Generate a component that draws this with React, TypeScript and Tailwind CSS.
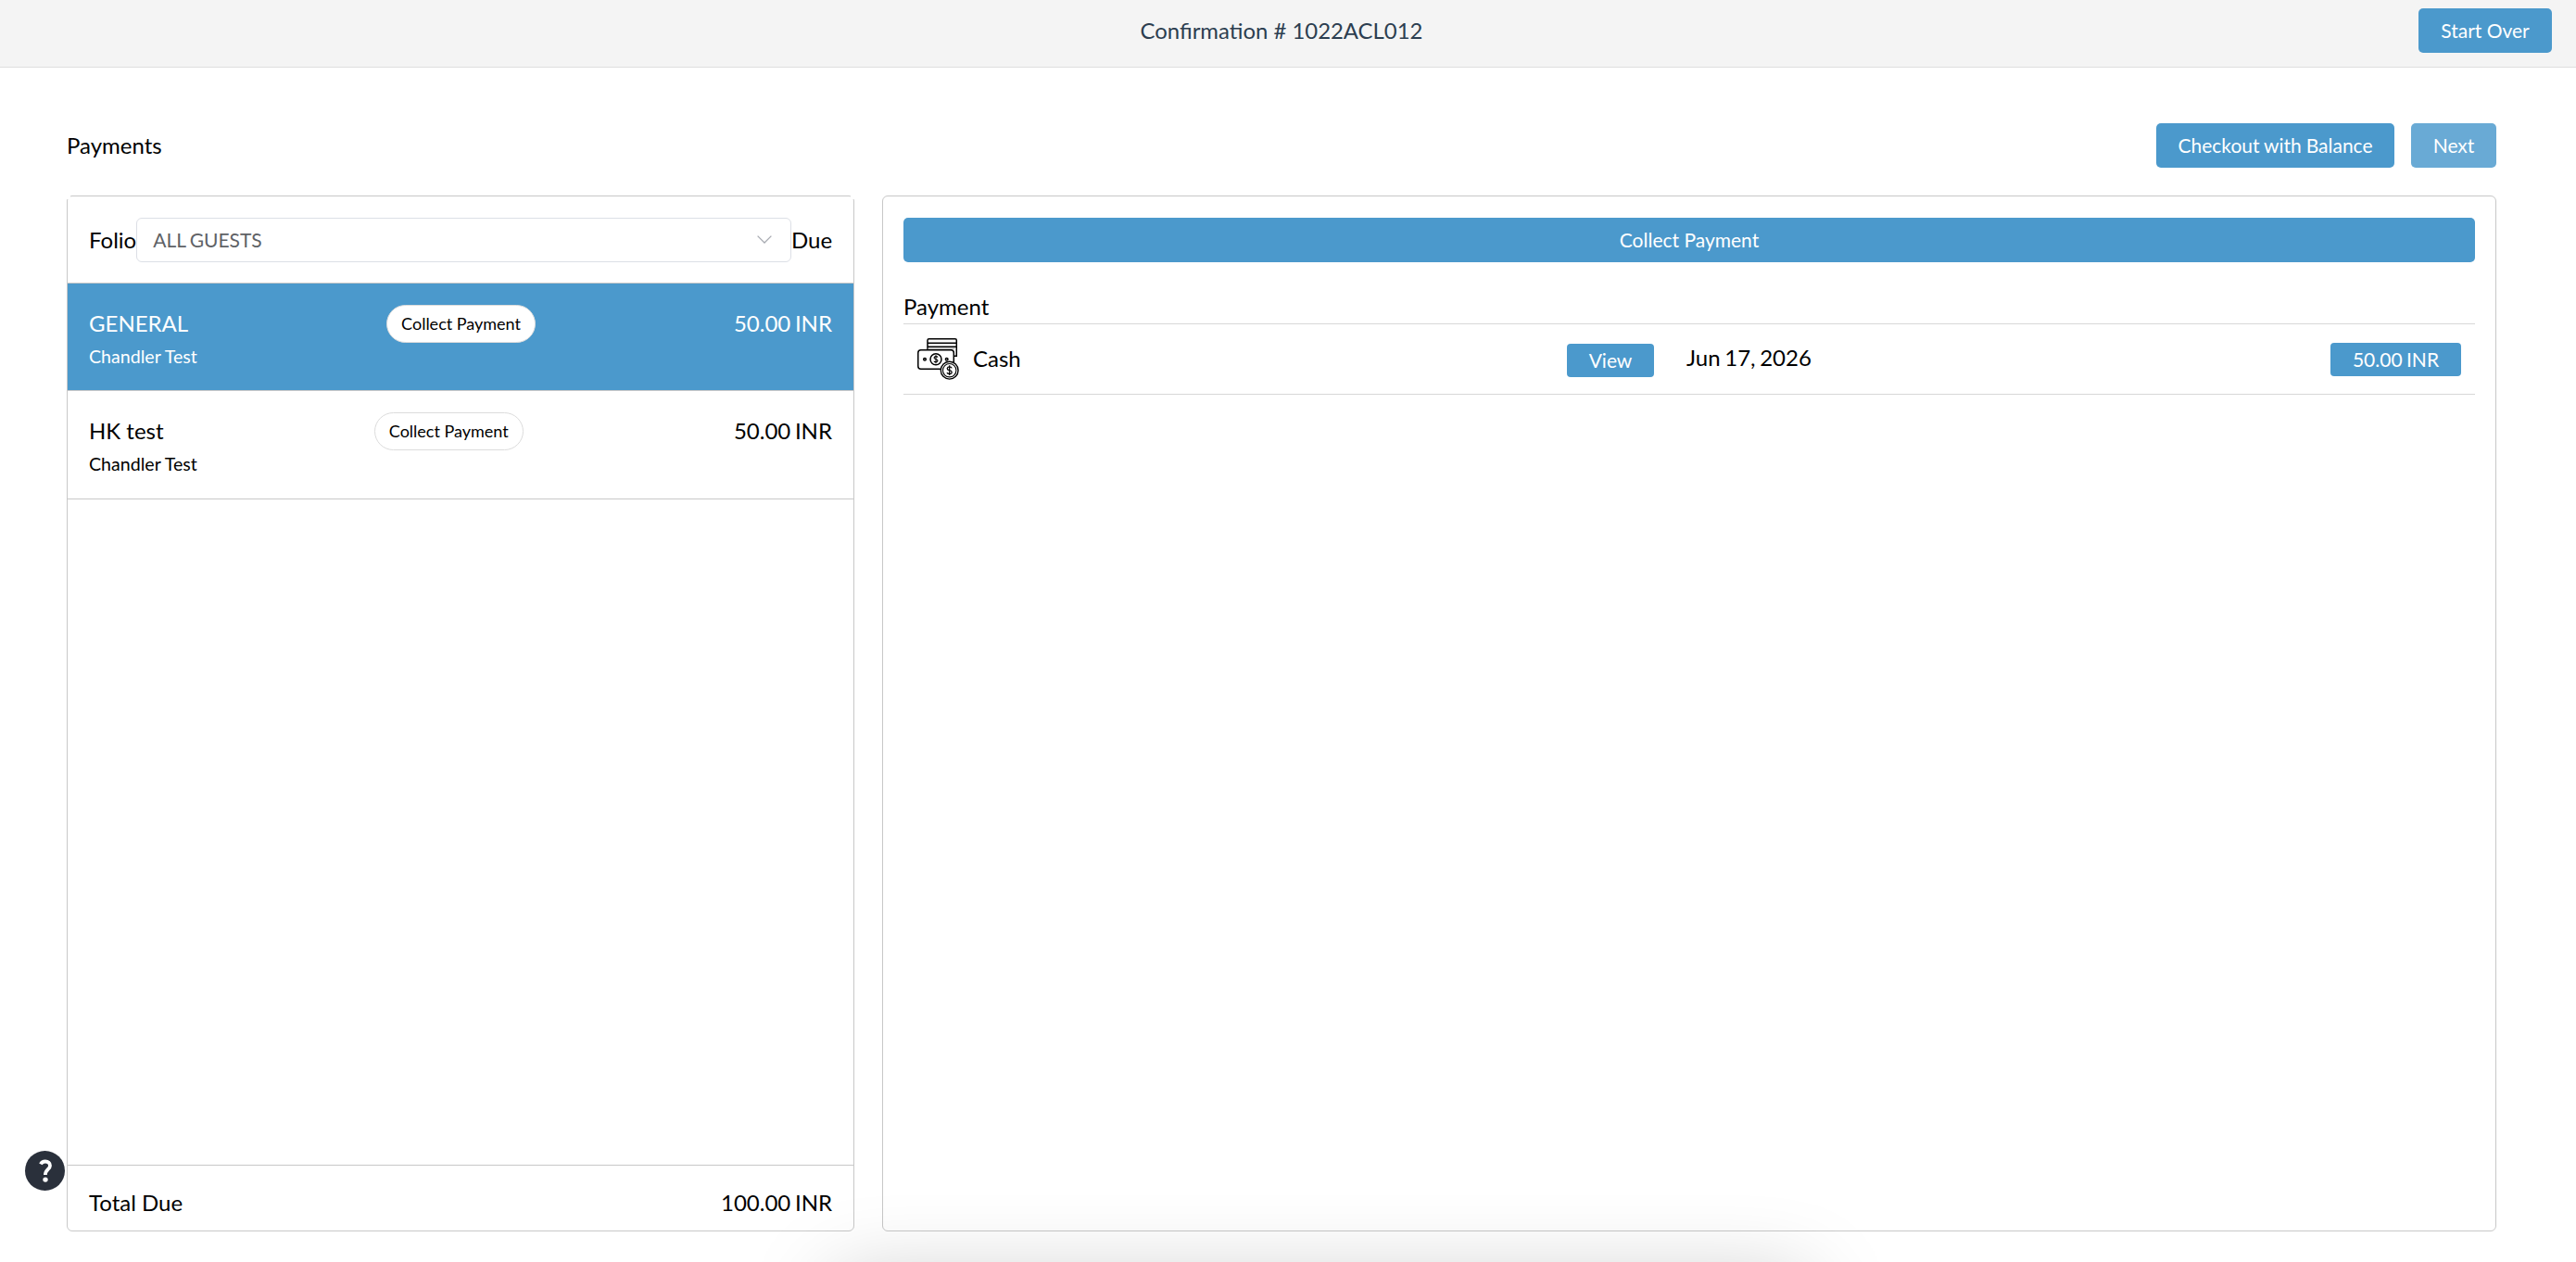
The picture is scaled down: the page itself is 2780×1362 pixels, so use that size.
import type { ReactNode } from "react";

type Folio = { name: string; guest: string; due: string; active: boolean };

const folios: Folio[] = [
  { name: "GENERAL", guest: "Chandler Test", due: "50.00 INR", active: true },
  { name: "HK test", guest: "Chandler Test", due: "50.00 INR", active: false },
];

function Button({ children, className = "" }: { children: ReactNode; className?: string }) {
  return (
    <button
      className={`flex items-center justify-center whitespace-nowrap text-[21px] leading-[25px] text-white ${className}`}
    >
      {children}
    </button>
  );
}

function CashIcon() {
  return (
    <svg width="46" height="46" viewBox="0 0 46 46" fill="none" stroke="#000" strokeWidth="1.5">
      <path d="M11 12V2.2Q11 .8 12.5 .8H40.8Q42.3 .8 42.3 2.2V19.3H39.8" />
      <path d="M11 5.3H42.3M11 9.3H42.3" />
      <path d="M11.5 11.2H40.5" stroke="#999" strokeWidth="1" />
      <rect x=".8" y="12.7" width="38.5" height="20.6" rx="3" fill="#fff" />
      <circle cx="20" cy="22.7" r="6" />
      <circle cx="8" cy="22.7" r="1.3" />
      <circle cx="31.7" cy="22.7" r="1.3" />
      <path
        d="M22 20.6Q21.6 19.6 20 19.6T18 21.1Q18 22.3 20 22.7T22 24.3Q22 25.8 20 25.8T18 24.8M20 18.2V27.2"
        strokeWidth="1.1"
      />
      <circle cx="34.7" cy="34.7" r="9.4" fill="#fff" strokeWidth="1.4" />
      <circle cx="34.7" cy="34.7" r="7.2" strokeWidth="1.1" />
      <path
        d="M37.2 32.3Q36.8 30.9 34.7 30.9T32.2 32.7Q32.2 34.2 34.7 34.7T37.2 36.7Q37.2 38.5 34.7 38.5T32.2 37.1M34.7 29.3V40.1"
        strokeWidth="1.2"
      />
    </svg>
  );
}

function HelpButton() {
  return (
    <button className="absolute left-[27px] top-[1242px] size-[43px] rounded-full bg-[#2a303b]" aria-label="Help">
      <svg width="43" height="43" viewBox="0 0 43 43" fill="none">
        <path
          d="M16.9 14.4C17.8 12.5 19.6 11.5 21.9 11.5C25 11.5 27 13.3 27 15.9C27 20 21.9 19.9 21.9 26"
          stroke="#fff"
          strokeWidth="3.8"
        />
        <circle cx="22" cy="31.1" r="2.7" fill="#fff" />
      </svg>
    </button>
  );
}

function FolioRow({ name, guest, due, active }: Folio) {
  return (
    <div
      className={`border-b border-[#c8c8c8] px-[23px] pt-[23px] ${
        active ? "h-[116px] bg-[#4b99cc] text-white" : "h-[117px] text-black"
      }`}
    >
      <div className="flex h-[41px] items-center justify-between">
        <span className="relative -top-px">{name}</span>
        <button className="h-[41px] w-[161px] rounded-full border border-[#dcdcdc] bg-white pb-[2px] text-[18px] leading-[22px] text-black">
          Collect Payment
        </button>
        <span className="relative -top-px [word-spacing:-1.5px]">{due}</span>
      </div>
      <div className="mt-[3px] text-[19.6px] leading-6">{guest}</div>
    </div>
  );
}

export default function App() {
  return (
    <div className="relative flex h-[1362px] w-[2780px] flex-col overflow-hidden bg-white font-['Lato',sans-serif] text-[24px] leading-[29px] text-black">
      <header className="grid h-[73px] shrink-0 grid-cols-[1fr_auto_1fr] border-b border-[#dedede] bg-[#f4f4f4] px-[26px] pt-[9px]">
        <span />
        <span className="relative -left-[7px] flex h-12 items-center pb-[2px] text-[23.9px] text-[#2c3e50]">
          Confirmation # 1022ACL012
        </span>
        <Button className="h-12 w-[144px] justify-self-end rounded-[5px] bg-[#4b99cc] pb-px">Start Over</Button>
      </header>

      <main className="flex flex-col px-[72px] pr-[86px] pt-[60px]">
        <div className="flex h-12 items-center">
          <h1 className="pb-[2px]">Payments</h1>
          <div className="ml-auto flex gap-[18px]">
            <Button className="h-12 w-[257px] rounded-[5px] bg-[#4b99cc] pb-px [word-spacing:-0.5px]">
              Checkout with Balance
            </Button>
            <Button className="h-12 w-[92px] rounded-[5px] bg-[#69aad5] pb-px">Next</Button>
          </div>
        </div>

        <div className="mt-[30px] flex h-[1118px] gap-[30px]">
          <section className="relative flex w-[850px] flex-col rounded-[6px] border border-[#c8c8c8]">
            <i className="absolute -left-px -top-px size-1 bg-white" />
            <i className="absolute -right-px -top-px size-1 bg-white" />
            <div className="flex h-[94px] items-center border-b border-[#c8c8c8] px-[23px]">
              <span>Folio</span>
              <div className="flex h-12 flex-1 items-center rounded-[6px] border-[1.5px] border-[#dcdfe6] pl-[17px] pr-5 text-[21px] text-[#606266]">
                <span className="[word-spacing:-1px]">ALL GUESTS</span>
                <svg className="ml-auto" width="16" height="9" viewBox="0 0 16 9" fill="none">
                  <path d="M.6 .6L8 8L15.4 .6" stroke="#a8abb2" strokeWidth="1.3" />
                </svg>
              </div>
              <span className="w-[44px] text-right">Due</span>
            </div>
            {folios.map((f) => (
              <FolioRow key={f.name} {...f} />
            ))}
            <div className="mt-auto flex h-[71px] justify-between border-t border-[#c8c8c8] px-[23px] pt-[25px]">
              <span>Total Due</span>
              <span className="[word-spacing:-1.5px]">100.00 INR</span>
            </div>
          </section>

          <section className="flex w-[1742px] flex-col rounded-[6px] border border-[#c8c8c8] px-[22px] pt-[23px]">
            <Button className="h-12 w-full rounded-[5px] bg-[#4b99cc] pb-px">Collect Payment</Button>
            <h2 className="mt-[33px]">Payment</h2>
            <div className="mt-1 flex h-[77px] items-center border-y border-[#d8d8d8] px-[15px]">
              <div className="flex w-[701px] items-center gap-[14px]">
                <CashIcon />
                <span className="-translate-y-px">Cash</span>
              </div>
              <Button className="h-9 w-[94px] translate-y-px rounded bg-[#4b99cc]">View</Button>
              <span className="ml-[35px] -translate-y-[2px] [word-spacing:-1.5px]">Jun 17, 2026</span>
              <Button className="ml-auto h-9 w-[141px] rounded bg-[#4b99cc] [word-spacing:-1px]">50.00 INR</Button>
            </div>
          </section>
        </div>
      </main>

      <HelpButton />
      <div className="pointer-events-none absolute left-[900px] top-[1384px] h-[60px] w-[1050px] shadow-[0_0_90px_rgba(0,0,0,0.25)]" />
    </div>
  );
}
